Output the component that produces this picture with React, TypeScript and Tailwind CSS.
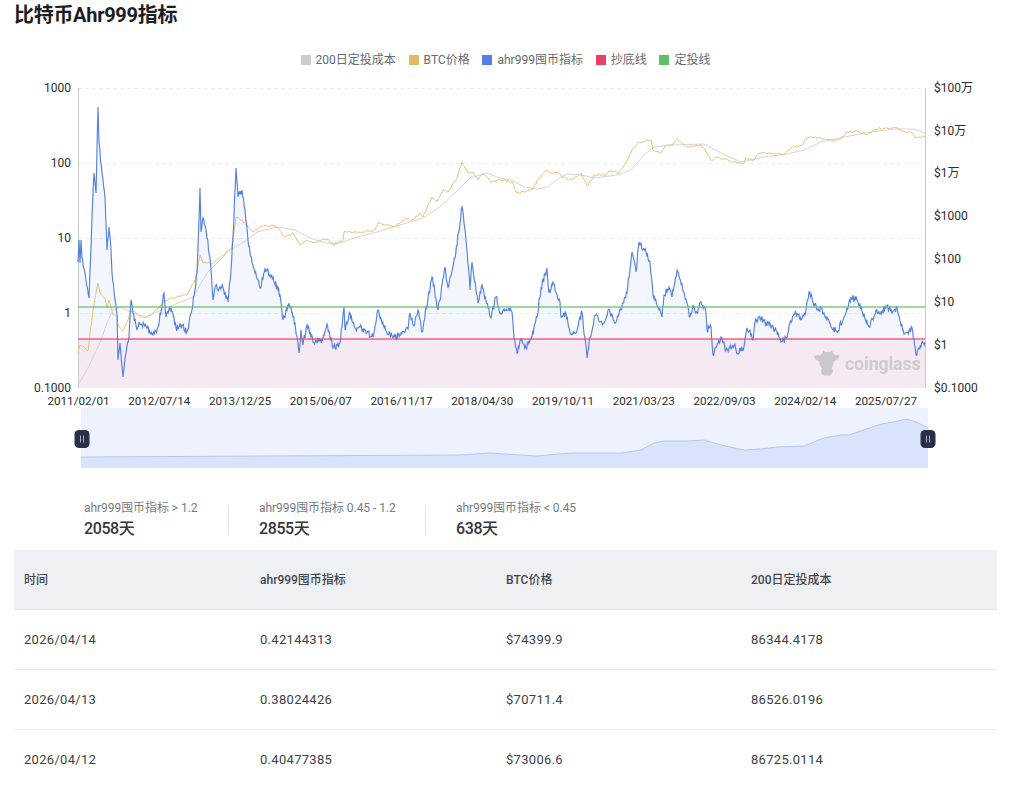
import React from "react";

type P = [number, number];

const BLUE: P[] = [[78,262],[79,240],[80,263],[81,240],[82,258],[84,268],[86,280],[89,298],[90,270],[91,250],[92,217],[94,173],[96,193],[98,107],[99,143],[102,173],[105,197],[107,250],[109,227],[111,250],[112,273],[115,300],[117,313],[118,360],[120,343],[123,377],[126,353],[129,337],[131,300],[133,313],[137,330],[139,322],[147,328],[153,335],[158,327],[164,293],[166,317],[171,308],[176,328],[182,325],[187,332],[192,310],[197,273],[200,188],[201,232],[203,218],[207,238],[210,257],[213,300],[215,287],[223,288],[228,302],[231,270],[233,237],[236,168],[238,197],[242,190],[245,210],[248,240],[250,253],[255,273],[260,288],[265,268],[273,277],[280,295],[283,320],[289,303],[295,323],[299,353],[301,330],[303,345],[307,325],[313,342],[322,340],[327,324],[333,348],[340,343],[344,307],[345,330],[350,313],[355,328],[360,327],[373,337],[378,310],[387,333],[395,337],[408,329],[410,313],[414,326],[418,310],[422,332],[428,298],[432,277],[438,310],[445,267],[448,288],[455,258],[462,207],[464,223],[467,250],[470,290],[472,262],[478,303],[482,285],[491,318],[496,297],[500,313],[504,309],[512,312],[514,338],[517,353],[521,340],[526,348],[532,336],[537,317],[541,288],[547,268],[549,293],[553,282],[560,302],[561,317],[566,313],[570,333],[576,333],[582,312],[587,358],[590,337],[595,316],[604,323],[608,310],[616,322],[621,310],[627,293],[632,252],[636,272],[639,242],[646,252],[650,262],[653,295],[659,310],[662,317],[664,295],[669,287],[672,297],[677,270],[684,292],[690,317],[693,305],[697,313],[701,302],[706,313],[707,330],[711,327],[713,355],[721,337],[726,350],[734,345],[737,354],[744,347],[747,328],[750,330],[753,340],[755,322],[759,317],[769,325],[776,330],[781,342],[787,338],[789,325],[796,313],[801,320],[806,310],[809,292],[812,298],[817,310],[821,307],[831,327],[837,332],[846,313],[851,297],[857,300],[869,327],[876,310],[881,312],[887,306],[892,313],[897,308],[904,334],[912,328],[916,355],[919,348],[925,342]];

const GOLD: P[] = [[78,353],[80,345],[88,351],[93,310],[98,283],[100,293],[105,298],[107,308],[109,300],[113,315],[117,315],[118,325],[123,331],[128,320],[132,310],[140,317],[150,316],[157,310],[163,302],[173,298],[187,295],[195,280],[200,255],[203,263],[213,263],[230,250],[232,248],[236,217],[242,220],[248,227],[253,232],[265,225],[277,227],[285,237],[293,233],[300,245],[307,240],[313,243],[327,239],[333,245],[343,240],[344,232],[350,232],[363,232],[375,230],[378,223],[393,227],[408,218],[412,220],[420,213],[423,217],[432,197],[437,202],[443,190],[448,192],[457,178],[462,162],[468,173],[473,172],[478,180],[483,174],[492,182],[500,180],[504,180],[512,182],[517,193],[524,192],[532,190],[539,178],[547,170],[551,173],[559,173],[562,177],[572,180],[581,173],[587,186],[594,175],[606,175],[609,171],[619,173],[626,163],[632,150],[639,142],[651,140],[653,150],[661,153],[666,145],[672,145],[677,139],[687,147],[701,145],[707,153],[712,161],[717,157],[734,162],[744,163],[746,158],[754,160],[759,153],[771,153],[784,155],[791,148],[802,145],[808,137],[821,138],[832,141],[841,139],[847,132],[857,131],[867,135],[876,129],[896,128],[904,132],[912,133],[916,138],[925,137]];

const GRAY: P[] = [[78,385],[87,370],[95,353],[100,343],[107,323],[113,310],[120,307],[133,313],[147,317],[157,312],[173,305],[193,297],[207,273],[230,250],[247,240],[257,232],[277,227],[295,230],[310,238],[325,243],[340,243],[357,237],[377,232],[400,225],[423,218],[440,207],[460,188],[470,178],[487,173],[500,178],[511,180],[524,187],[537,189],[547,187],[561,177],[567,174],[581,175],[594,178],[617,175],[631,170],[644,155],[654,147],[671,145],[704,144],[721,153],[741,162],[764,157],[787,154],[804,150],[821,142],[844,137],[871,132],[894,129],[914,129],[925,133]];

const ZOOM: P[] = [[81,457],[460,455],[490,453],[504,454],[537,456],[571,453],[621,453],[641,450],[654,443],[664,441],[687,441],[704,440],[721,445],[744,450],[761,449],[777,447],[804,446],[824,438],[841,435],[849,435],[881,424],[894,422],[906,419],[916,422],[928,428]];

function jitter(pts: P[], step: number, amp: number, seed: number): P[] {
  let s = seed;
  const rnd = () => {
    s = (s * 1664525 + 1013904223) % 4294967296;
    return s / 4294967296 - 0.5;
  };
  const out: P[] = [];
  for (let i = 0; i < pts.length - 1; i++) {
    const [x0, y0] = pts[i];
    const [x1, y1] = pts[i + 1];
    const n = Math.max(1, Math.round((x1 - x0) / step));
    out.push([x0, y0]);
    for (let k = 1; k < n; k++) {
      const t = k / n;
      out.push([x0 + (x1 - x0) * t, y0 + (y1 - y0) * t + rnd() * amp]);
    }
  }
  out.push(pts[pts.length - 1]);
  return out;
}

const toPath = (pts: P[]) =>
  pts.map(([x, y], i) => `${i ? "L" : "M"}${x.toFixed(1)} ${y.toFixed(1)}`).join("");

const blueLine = toPath(jitter(BLUE, 0.7, 6.5, 17));
const goldLine = toPath(jitter(GOLD, 1.3, 2.2, 91));
const grayLine = toPath(GRAY);
const zoomLine = toPath(ZOOM);

const LEFT: [string, number][] = [["1000", 88], ["100", 163], ["10", 238], ["1", 313], ["0.1000", 388]];
const RIGHT: [string, number][] = [["$100万", 88], ["$10万", 131], ["$1万", 173], ["$1000", 216], ["$100", 259], ["$10", 302], ["$1", 345], ["$0.1000", 388]];
const DATES = ["2011/02/01", "2012/07/14", "2013/12/25", "2015/06/07", "2016/11/17", "2018/04/30", "2019/10/11", "2021/03/23", "2022/09/03", "2024/02/14", "2025/07/27"];

const LEGEND: [string, string][] = [
  ["200日定投成本", "bg-[#c9ccd1]"],
  ["BTC价格", "bg-[#e3b95f]"],
  ["ahr999囤币指标", "bg-[#5580ea]"],
  ["抄底线", "bg-[#ef3d67]"],
  ["定投线", "bg-[#63bf6b]"],
];

const ROWS = [
  ["2026/04/14", "0.42144313", "$74399.9", "86344.4178"],
  ["2026/04/13", "0.38024426", "$70711.4", "86526.0196"],
  ["2026/04/12", "0.40477385", "$73006.6", "86725.0114"],
];

function Handle({ x }: { x: number }) {
  return (
    <g>
      <rect x={x - 7.5} y={430} width={15} height={18} rx={4.5} fill="#2b3048" />
      <rect x={x - 2} y={435.5} width={1} height={7} fill="#aab0c0" />
      <rect x={x + 1} y={435.5} width={1} height={7} fill="#aab0c0" />
    </g>
  );
}

function Stat({ label, value, className }: { label: string; value: string; className: string }) {
  return (
    <div className={className}>
      <div className="text-[12px] leading-[14px] text-[#777b80] whitespace-nowrap tracking-[-0.05px]">{label}</div>
      <div className="mt-[4px] text-[16px] leading-[20px] font-medium text-[#34373d] whitespace-nowrap tracking-[-0.4px]">{value}</div>
    </div>
  );
}

export default function App() {
  return (
    <div className="w-[1009px] h-screen overflow-hidden bg-white font-[Roboto,'Noto_Sans_CJK_SC',sans-serif]">
      <h1 className="pl-[14px] h-[30px] text-[20px] leading-[30px] font-bold text-[#1b1d21] tracking-[-0.3px]">比特币Ahr999指标</h1>

      <div className="mt-[21px] h-[18px] flex justify-center items-center gap-[12.75px] pl-[2px]">
        {LEGEND.map(([t, c]) => (
          <div key={t} className="flex items-center gap-[5px]">
            <span className={`w-[10px] h-[10px] ${c}`} />
            <span className="text-[12px] leading-[18px] text-[#666a70]">{t}</span>
          </div>
        ))}
      </div>

      <svg className="mt-[9px] block" width={1009} height={400} viewBox="0 78 1009 400">
        {[88, 163, 238, 313].map((y) => (
          <line key={y} x1={78} x2={925} y1={y + 0.5} y2={y + 0.5} stroke="#eceef0" strokeDasharray="4 3" />
        ))}
        <path d={`${blueLine}L925 388L78 388Z`} fill="#5580ea" fillOpacity={0.07} />
        <rect x={78} y={339} width={847} height={49} fill="#f5e9f3" />
        <line x1={78.5} x2={78.5} y1={88} y2={388} stroke="#c8c8c8" />
        <line x1={925.5} x2={925.5} y1={88} y2={388} stroke="#c8c8c8" />
        <path d={grayLine} fill="none" stroke="#d3d5d9" strokeWidth={1} />
        <path d={goldLine} fill="none" stroke="#e5c27a" strokeWidth={1} />
        <path d={blueLine} fill="none" stroke="#5580e0" strokeWidth={1.15} />
        <line x1={78} x2={925} y1={307} y2={307} stroke="#63bf6b" strokeOpacity={0.62} strokeWidth={2} />
        <line x1={78} x2={925} y1={339} y2={339} stroke="#ef3d67" strokeOpacity={0.6} strokeWidth={2} />

        <path
          d="M817 355l3 .5 2.500-2.500 1-2.500 2 1.500h4.500l2-1.500 1 2.500 2.500 2.500 3-.5 1 1.500-2 3-3.500 1.500-1 4.500-1.500 3 1.500 2.500-1 2.500-2 2h-6l-2.500-1.500-.5-3 1-2.500-2-3-1-4.500-3.500-1.500-2-3z"
          fill="#c9c9cb"
        />
        <text x={845} y={370} fontSize={17.5} fontWeight={700} fill="#cccccd">coinglass</text>

        <g fontSize={12} fill="#2a2d33">
          {LEFT.map(([t, y]) => (
            <text key={t} x={71} y={y + 4} textAnchor="end">{t}</text>
          ))}
          {RIGHT.map(([t, y]) => (
            <text key={t} x={934} y={y + 4}>{t}</text>
          ))}
          {DATES.map((t, i) => (
            <text key={t} x={78.5 + i * 80.75} y={405} fontSize={11.7} textAnchor="middle">{t}</text>
          ))}
        </g>

        <rect x={81} y={408} width={847} height={60} fill="#eef2fe" />
        <path d={`${zoomLine}L928 468L81 468Z`} fill="#d9e4fc" />
        <path d={zoomLine} fill="none" stroke="#b7c7ee" />
        <Handle x={82} />
        <Handle x={928} />
      </svg>

      <div className="mt-[22px] flex items-center pl-[84px] h-[40px]">
        <Stat label="ahr999囤币指标 > 1.2" value="2058天" className="w-[144px]" />
        <div className="w-px h-[29px] bg-[#e5e7ea]" />
        <Stat label="ahr999囤币指标 0.45 - 1.2" value="2855天" className="ml-[30px] w-[166px]" />
        <div className="w-px h-[29px] bg-[#e5e7ea]" />
        <Stat label="ahr999囤币指标 < 0.45" value="638天" className="ml-[30px]" />
      </div>

      <div className="mt-[10px] mx-[14px] w-[983px]">
        <div className="grid grid-cols-[236px_246px_245px_256px] h-[60px] items-center bg-[#eef0f3] border-b border-[#e4e6e9] text-[12px] font-medium text-[#43464c]">
          <div className="pl-[10px]">时间</div>
          <div className="pl-[10px]">ahr999囤币指标</div>
          <div className="pl-[10px]">BTC价格</div>
          <div className="pl-[10px]">200日定投成本</div>
        </div>
        {ROWS.map((r) => (
          <div key={r[0]} className="grid grid-cols-[236px_246px_245px_256px] h-[60px] items-center border-b border-[#e8e9eb] text-[13px] text-[#3c3f45] tracking-[0.3px]">
            {r.map((c) => (
              <div key={c} className="pl-[10px]">{c}</div>
            ))}
          </div>
        ))}
      </div>
    </div>
  );
}
